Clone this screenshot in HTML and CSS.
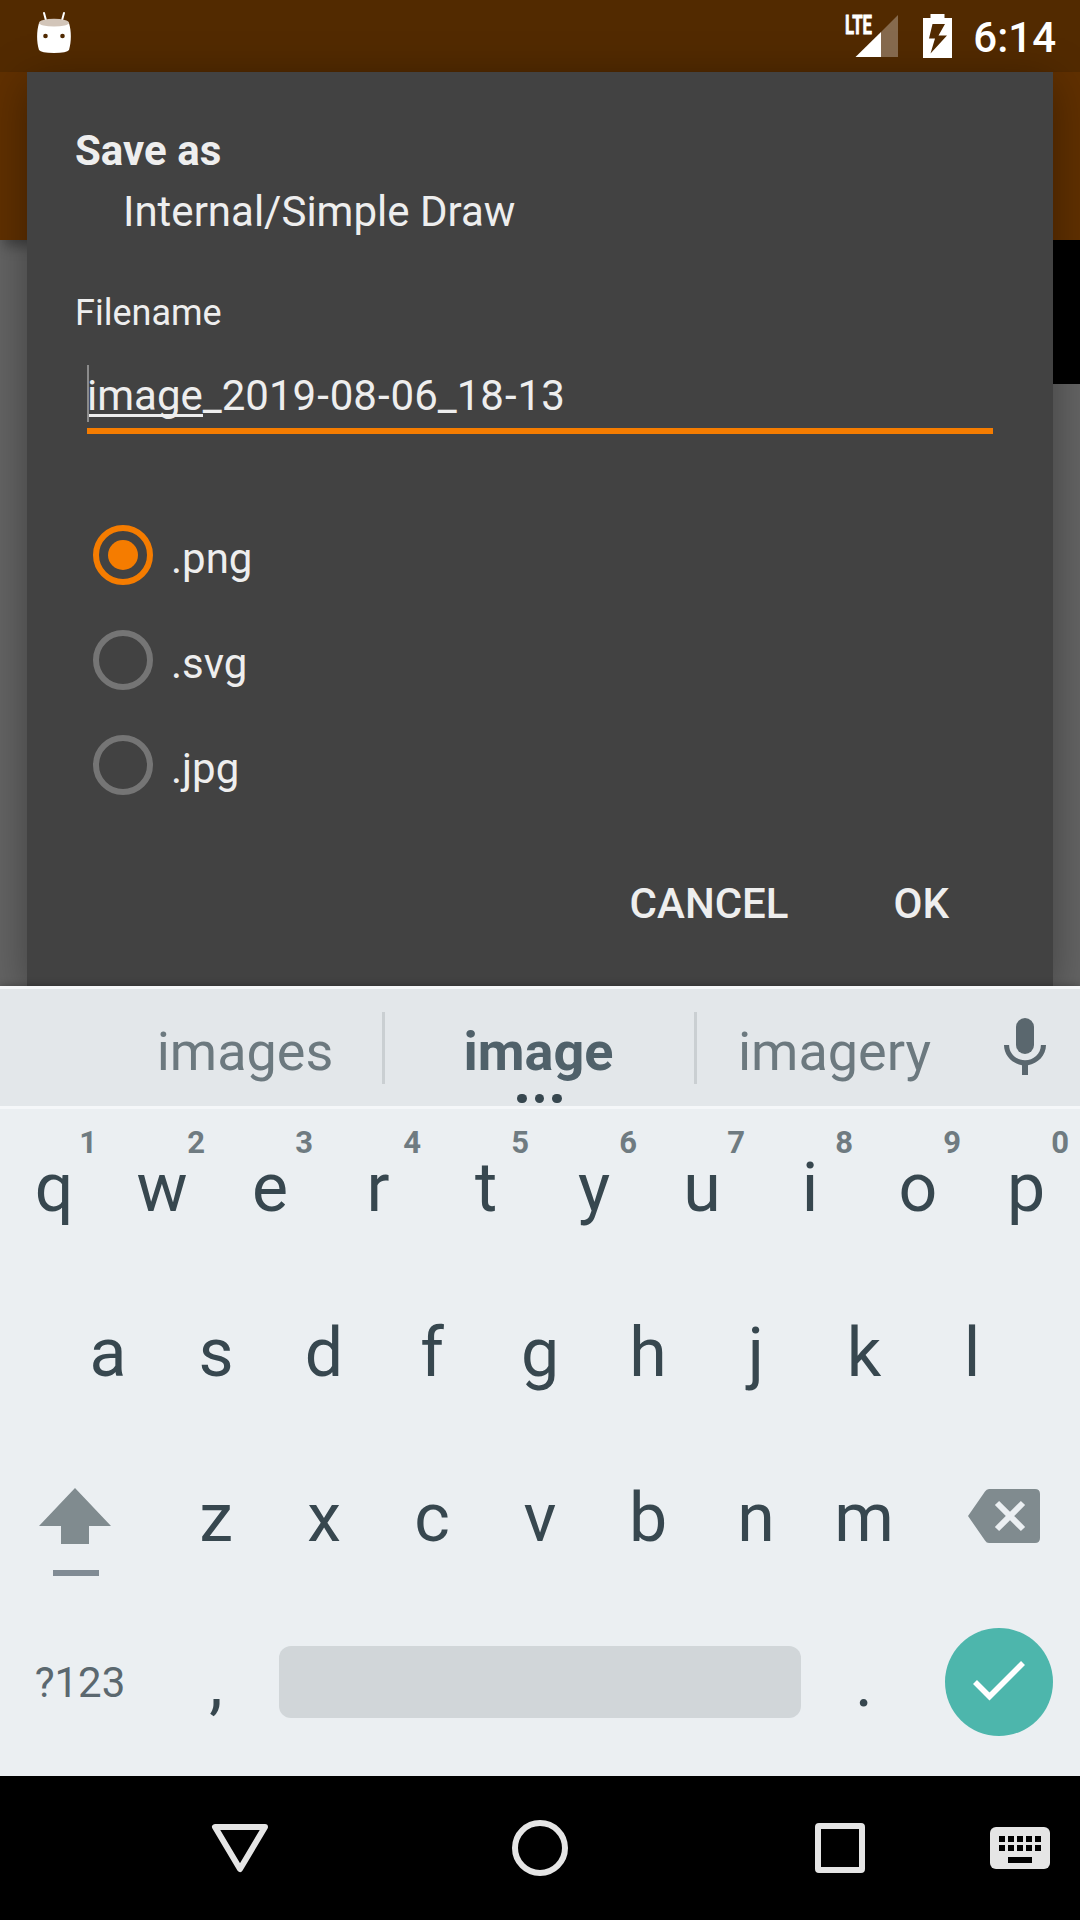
FILE: index.html
```html
<!DOCTYPE html>
<html lang="en">
<head>
<meta charset="utf-8">
<title>Simple Draw</title>
<link rel="stylesheet" href="styles.css">
</head>
<body>
<div class="screen">
  <div class="backdrop">
    <div class="appbar"></div>
    <div class="canvas"><div class="swatch"></div></div>
  </div>

  <header class="status">
    <svg class="status-droid" width="36" height="44" viewBox="0 0 36 44">
      <path d="M8 2l3 11M28 2l-3 11" stroke="#fff" stroke-width="2" stroke-linecap="round"/>
      <path d="M3 12Q18 18 33 12C35.500 20 35.500 31 33 39Q31 42 18 42T3 39C.5 31 .5 20 3 12z" fill="#fff"/>
      <ellipse cx="18" cy="11.700" rx="15" ry="3.900" fill="#d2c5b9"/>
      <circle cx="9.500" cy="25" r="2.300" fill="#502900"/><circle cx="26.500" cy="25" r="2.300" fill="#502900"/>
    </svg>
    <svg class="status-signal" width="54" height="44" viewBox="0 0 54 44">
      <path d="M53 1v42H36V18z" fill="#fff" fill-opacity=".3"/>
      <path d="M10.500 43L36 18v25z" fill="#fff"/>
      <text class="lte" x="0" y="19.500" textLength="27" lengthAdjust="spacingAndGlyphs">LTE</text>
    </svg>
    <svg class="status-battery" width="29" height="44" viewBox="0 0 29 44">
      <path fill="#fff" fill-rule="evenodd" d="M7.500 0h14v4H29v40H0V4h7.500zM9.500 10L6 24.500h6L7.500 39.500 24 21.500h-8.500L22 10z"/>
    </svg>
    <span class="clock">6:14</span>
  </header>

  <main class="dialog">
    <h1 class="title">Save as</h1>
    <p class="path">Internal/Simple Draw</p>
    <label class="label">Filename</label>
    <div class="field"><span class="composing">image</span>_2019<span class="dash">-</span>08<span class="dash">-</span>06_18<span class="dash">-</span>13<i class="caret"></i></div>
    <div class="formats">
      <div class="format"><span class="radio radio-on"></span><span>.png</span></div>
      <div class="format"><span class="radio"></span><span>.svg</span></div>
      <div class="format"><span class="radio"></span><span>.jpg</span></div>
    </div>
    <div class="actions"><span>CANCEL</span><span>OK</span></div>
  </main>

  <section class="keyboard">
    <div class="suggestions">
      <span class="suggestion first">images</span>
      <span class="suggestion best">image<i class="more"><b></b><b></b><b></b></i></span>
      <span class="suggestion last">imagery</span>
      <svg class="mic" width="72" height="72" viewBox="0 0 24 24" fill="#5a676e">
        <rect x="9" y="2" width="6" height="12" rx="3"/>
        <path d="M17.300 11c0 3-2.540 5.100-5.300 5.100S6.700 14 6.700 11H5c0 3.410 2.720 6.230 6 6.720V21h2v-3.280c3.280-.48 6-3.300 6-6.720h-1.700z"/>
      </svg>
    </div>
    <div class="row">
      <span class="key">q<sup>1</sup></span><span class="key">w<sup>2</sup></span><span class="key">e<sup>3</sup></span><span class="key">r<sup>4</sup></span><span class="key">t<sup>5</sup></span><span class="key">y<sup>6</sup></span><span class="key">u<sup>7</sup></span><span class="key">i<sup>8</sup></span><span class="key">o<sup>9</sup></span><span class="key">p<sup>0</sup></span>
    </div>
    <div class="row">
      <span class="key">a</span><span class="key">s</span><span class="key">d</span><span class="key">f</span><span class="key">g</span><span class="key">h</span><span class="key">j</span><span class="key">k</span><span class="key">l</span>
    </div>
    <div class="row">
      <span class="key-wide shift">
        <svg width="72" height="90" viewBox="0 0 72 90"><path d="M36 0l36 38H50v18H22V38H0z" fill="#808b8f"/><path d="M14 82h46v6H14z" fill="#808b94"/></svg>
      </span>
      <span class="key">z</span><span class="key">x</span><span class="key">c</span><span class="key">v</span><span class="key">b</span><span class="key">n</span><span class="key">m</span>
      <span class="key-wide backspace">
        <svg width="72" height="54" viewBox="0 0 72 54"><path d="M21 0h46q5 0 5 5v44q0 5-5 5H21q-2.500 0-4-2.500L0 27 17 2.500Q18.500 0 21 0z" fill="#808b8f"/><path d="M29 14l26 26M55 14L29 40" stroke="#ebeff2" stroke-width="6"/></svg>
      </span>
    </div>
    <div class="row bottom">
      <span class="symbols">?123</span>
      <span class="key">,</span>
      <span class="space"></span>
      <span class="key">.</span>
      <span class="enter"><svg width="108" height="108" viewBox="0 0 108 108"><circle cx="54" cy="54" r="54" fill="#4db6ac"/><path d="M30 54l14.500 14.500L78 35" fill="none" stroke="#fff" stroke-width="5.600"/></svg></span>
    </div>
  </section>

  <nav class="navbar">
    <svg width="60" height="60" viewBox="0 0 60 60"><path d="M5 9h50L30 51z" fill="none" stroke="#e5e5e5" stroke-width="6" stroke-linejoin="round"/></svg>
    <svg width="60" height="60" viewBox="0 0 60 60"><circle cx="30" cy="30" r="25" fill="none" stroke="#e5e5e5" stroke-width="6"/></svg>
    <svg width="60" height="60" viewBox="0 0 60 60"><path fill="#e5e5e5" fill-rule="evenodd" d="M9 5h42q4 0 4 4v42q0 4-4 4H9q-4 0-4-4V9q0-4 4-4zM11 11v38h38V11z"/></svg>
    <svg class="ime" width="60" height="42" viewBox="0 0 60 42"><rect width="60" height="42" rx="6" fill="#e5e5e5"/><path d="M9 9h6v6H9zM18 9h6v6h-6zM27 9h6v6h-6zM36 9h6v6h-6zM45 9h6v6h-6zM9 18h6v6H9zM18 18h6v6h-6zM27 18h6v6h-6zM36 18h6v6h-6zM45 18h6v6h-6zM18 30h24v6H18z"/></svg>
  </nav>
</div>
</body>
</html>
```
FILE: styles.css
```css
* { box-sizing: border-box; margin: 0; padding: 0; }
body { font-family: Roboto, sans-serif; color: #eee; background: #000; }
svg { display: block; flex: none; }
.screen { position: relative; width: 1080px; height: 1920px; display: flex; flex-direction: column; overflow: hidden; }

/* The dimmed drawing screen lies under the dialog */
.backdrop { position: absolute; inset: 0; isolation: isolate; background: #522a00; padding-top: 72px; display: flex; flex-direction: column; }
.appbar { height: 168px; background: #603000; box-shadow: 0 10px 12px -4px rgba(0,0,0,.35); z-index: 1; }
.canvas { flex: 1; background: #646464; display: flex; justify-content: flex-end; }
.swatch { width: 144px; height: 144px; background: #000; }

.status { position: relative; z-index: 2; height: 72px; display: flex; align-items: flex-start; padding: 0 24px 0 36px; }
.status-droid { margin-top: 11px; }
.status-signal { margin: 14px 0 0 773px; overflow: visible; }
.status-battery { margin: 14px 0 0 24px; }
.lte { font: 700 26px Roboto, sans-serif; fill: #fff; stroke: #fff; stroke-width: .8px; }
.clock { margin-left: auto; font-size: 42px; font-weight: 500; line-height: 76px; color: #fff; }

.dialog { position: relative; height: 914px; margin: 0 27px; background: #424242; box-shadow: 0 10px 42px rgba(0,0,0,.36); padding: 48px 60px 0 48px; display: flex; flex-direction: column; font-size: 42px; }
.title { font-size: 42px; font-weight: 700; line-height: 61px; }
.path { padding-left: 48px; line-height: 61px; }
.label { margin-top: 46px; font-size: 36px; line-height: 50px; }
.field { position: relative; margin: 22px 0 0 12px; height: 74px; padding-top: 11px; line-height: 49px; border-bottom: 6px solid #f57c00; }
.composing { display: inline-block; height: 46px; border-bottom: 3px solid #eee; }
.dash { padding: 0 1px; }
.caret { position: absolute; left: 0; top: 5px; width: 2px; height: 57px; background: #8b8b8b; }
.formats { margin: 69px 0 0 18px; }
.format { display: flex; align-items: center; gap: 18px; height: 105px; }
.format span + span { padding-top: 5px; }
.radio { align-self: flex-start; margin-top: 22px; width: 60px; height: 60px; border: 6px solid #757575; border-radius: 50%; display: grid; place-items: center; }
.radio-on { border-color: #f57c00; }
.radio-on::after { content: ""; width: 30px; height: 30px; border-radius: 50%; background: #f57c00; }
.actions { margin-top: 60px; display: flex; justify-content: flex-end; gap: 105px; padding-right: 44px; font-weight: 500; line-height: 52px; }

.keyboard { position: relative; height: 790px; background: #ebeff2; color: #37474f; box-shadow: 0 0 8px rgba(0,0,0,.3); }
.suggestions { height: 123px; background: #e3e7ea; border: solid #f5f7f9; border-width: 3px 0; display: flex; align-items: center; color: #6c797f; font-size: 54px; }
.suggestion { position: relative; width: 312px; height: 72px; margin-top: 1px; padding-top: 7px; border-left: 3px solid #cacfd2; text-align: center; line-height: 66px; }
.first { width: 274px; margin-left: 108px; border: 0; }
.best { color: #50616a; font-weight: 700; padding-right: 2px; }
.last { width: 278px; }
.more { position: absolute; left: 132px; bottom: -19px; display: flex; gap: 8px; }
.more b { width: 9.5px; height: 9.5px; border-radius: 50%; background: #37474f; }
.mic { margin-left: 17px; }
.row { display: flex; justify-content: center; height: 165px; }
.key { position: relative; width: 108px; text-align: center; font-size: 68px; line-height: 158px; }
.key sup { position: absolute; right: 11px; top: 14px; font-size: 31px; line-height: 40px; font-weight: 700; color: #6f7b81; }
.key-wide { width: 162px; }
.shift { padding: 49px 0 0 39px; }
.backspace { padding: 50px 0 0 50px; }
.bottom { align-items: flex-start; justify-content: flex-start; }
.symbols { width: 162px; padding-right: 2px; text-align: center; font-size: 42px; line-height: 157px; color: #5b686f; }
.space { width: 522px; height: 72px; margin: 42px 9px 0; border-radius: 12px; background: #d1d6d9; }
.enter { margin: 24px 0 0 27px; }

.navbar { position: relative; height: 144px; background: #000; display: flex; align-items: center; padding-left: 210px; gap: 240px; }
.ime { margin-left: -120px; }
```
